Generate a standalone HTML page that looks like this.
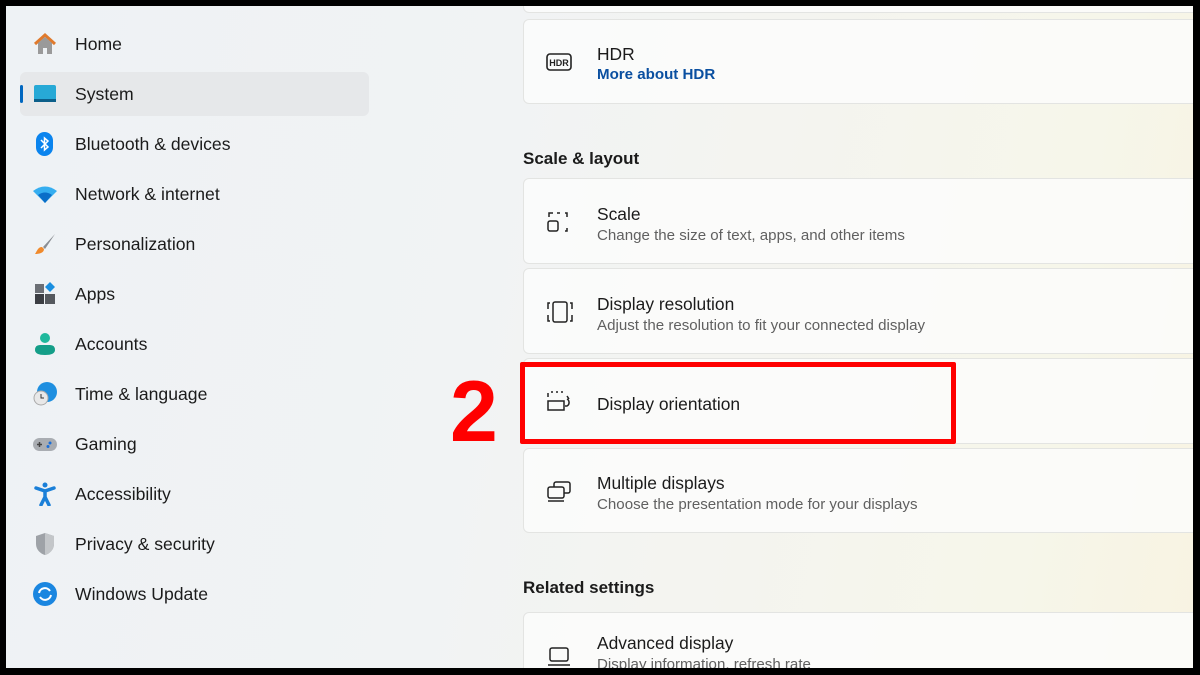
<!DOCTYPE html>
<html><head><style>
*{margin:0;padding:0;box-sizing:border-box}
body{width:1200px;height:675px;background:#000;position:relative;overflow:hidden;font-family:"Segoe UI","Liberation Sans",sans-serif}
#app{position:absolute;left:6px;top:6px;width:1187px;height:662px;overflow:hidden;background:linear-gradient(100deg,#eef2f5 0%,#f1f3f4 40%,#f4f4f0 60%,#f6f6ea 85%,#f8f3e2 100%)}
.nav{position:absolute;left:14px;width:349px;height:44px;border-radius:6px;font-size:17.6px;color:#1b1b1b}
.nav span{position:absolute;left:55px;top:12px}
.nav .ic{position:absolute;left:13px;top:10px;width:24px;height:24px}
.sel{background:#e6e8ea}
.bar{position:absolute;left:0;top:13px;width:3px;height:18px;border-radius:2px;background:#0067c0}
.card{position:absolute;left:517px;width:680px;background:rgba(252,252,251,0.85);border:1px solid #e3e4e2;border-radius:6px}
.card .t{position:absolute;left:73px;font-size:17.4px;color:#1b1b1b}
.card .s{position:absolute;left:73px;font-size:15.1px;color:#606060}
.card svg{position:absolute;left:22px}
.h{position:absolute;left:517px;font-size:17px;font-weight:600;color:#1b1b1b}
</style></head><body>
<div id="app">
<div class="nav" style="top:16px"><svg class="ic" viewBox="0 0 24 24"><path d="M2 12 12 3 22 12" fill="none" stroke="#e07a2c" stroke-width="3"/><path d="M5 11v11h5v-6h4v6h5V11l-7-6z" fill="#9a9a9a"/></svg><span>Home</span></div>
<div class="nav sel" style="top:66px"><div class="bar"></div><svg class="ic" viewBox="0 0 24 24"><rect x="1" y="3" width="22" height="17" rx="2" fill="#27a9d6"/><rect x="1" y="17" width="22" height="3" fill="#0c5f8a"/></svg><span>System</span></div>
<div class="nav" style="top:116px"><svg class="ic" viewBox="0 0 24 24"><rect x="3" y="0" width="17" height="24" rx="8.5" fill="#0a84ee"/><path d="M8 8l7 7-3.5 3V6L15 9 8 16" fill="none" stroke="#fff" stroke-width="1.5"/></svg><span>Bluetooth &amp; devices</span></div>
<div class="nav" style="top:166px"><svg class="ic" viewBox="0 0 24 24"><path d="M0 9Q12 0 24 9L12 21z" fill="#35aef0"/><path d="M5 13Q12 8 19 13L12 21z" fill="#0a6ec8"/></svg><span>Network &amp; internet</span></div>
<div class="nav" style="top:216px"><svg class="ic" viewBox="0 0 24 24"><path d="M22 2 10 15l2 2z" fill="#8a8e94"/><path d="M9 15c-4 0-5 4-7 7 4 0 9-1 9-5z" fill="#f08a2c"/></svg><span>Personalization</span></div>
<div class="nav" style="top:266px"><svg class="ic" viewBox="0 0 24 24"><rect x="2" y="2" width="9" height="9" fill="#6b6f75"/><rect x="2" y="12" width="9" height="10" fill="#3b3e43"/><rect x="12" y="12" width="10" height="10" fill="#55595e"/><path d="M17 0l5 5-5 5-5-5z" fill="#1a8fe0"/></svg><span>Apps</span></div>
<div class="nav" style="top:316px"><svg class="ic" viewBox="0 0 24 24"><circle cx="12" cy="6" r="5" fill="#1fb89c"/><path d="M2 18q0-5 5-5h10q5 0 5 5v0q0 5-10 5T2 18z" fill="#149e88"/></svg><span>Accounts</span></div>
<div class="nav" style="top:366px"><svg class="ic" viewBox="0 0 24 24"><circle cx="14" cy="10" r="10" fill="#1e8fe0"/><circle cx="8" cy="16" r="7" fill="#e8e8e8" stroke="#aaa"/><path d="M8 12v4h3" stroke="#333" fill="none"/></svg><span>Time &amp; language</span></div>
<div class="nav" style="top:416px"><svg class="ic" viewBox="0 0 24 24"><rect x="0" y="6" width="24" height="13" rx="6.5" fill="#a9adb2"/><path d="M4 12.5h5M6.5 10v5" stroke="#444" stroke-width="1.5"/><circle cx="17" cy="11" r="1.5" fill="#1a6ed8"/><circle cx="15" cy="14.5" r="1.5" fill="#1a6ed8"/></svg><span>Gaming</span></div>
<div class="nav" style="top:466px"><svg class="ic" viewBox="0 0 24 24"><circle cx="12" cy="3" r="2.5" fill="#1a7fd8"/><path d="M3 6l9 3 9-3M12 9v6l-4 8M12 15l4 8" stroke="#1a7fd8" stroke-width="3.5" fill="none" stroke-linecap="round"/></svg><span>Accessibility</span></div>
<div class="nav" style="top:516px"><svg class="ic" viewBox="0 0 24 24"><path d="M12 1 3 4v8c0 6 5 10 9 11 4-1 9-5 9-11V4z" fill="#9ea2a7"/><path d="M12 1v22c4-1 9-5 9-11V4z" fill="#c3c6c9"/></svg><span>Privacy &amp; security</span></div>
<div class="nav" style="top:566px"><svg class="ic" viewBox="0 0 24 24"><circle cx="12" cy="12" r="12" fill="#1a86e0"/><path d="M6 11a6 6 0 0 1 11-2M18 13a6 6 0 0 1-11 2" stroke="#fff" stroke-width="2" fill="none"/></svg><span>Windows Update</span></div>

<div class="card" style="top:-10px;height:17px"></div>
<div class="card" style="top:13px;height:85px"><svg style="top:33px" width="26" height="18" viewBox="0 0 26 18"><rect x="1" y="1" width="24" height="16" rx="3" fill="none" stroke="#222" stroke-width="1.6"/><text x="13" y="13" font-size="9" font-weight="bold" text-anchor="middle" font-family="Liberation Sans" fill="#222">HDR</text></svg><div class="t" style="top:24px">HDR</div><div class="s" style="top:46px;color:#0a4fa0;font-weight:600">More about HDR</div></div>
<div class="h" style="top:143px">Scale &amp; layout</div>
<div class="card" style="top:172px;height:86px"><svg style="top:31px" width="24" height="24" viewBox="0 0 24 24" fill="none" stroke="#222" stroke-width="1.5"><path d="M3 7V3h4M11 3h3M19 3h2v4M21 18v3h-2"/><rect x="2" y="11" width="10" height="10" rx="2"/></svg><div class="t" style="top:25px">Scale</div><div class="s" style="top:48px">Change the size of text, apps, and other items</div></div>
<div class="card" style="top:262px;height:86px"><svg style="top:31px" width="28" height="24" viewBox="0 0 28 24" fill="none" stroke="#222" stroke-width="1.5"><rect x="7" y="2" width="14" height="20" rx="2"/><path d="M4 3H2v6M2 15v6h2M24 3h2v6M26 15v6h-2"/></svg><div class="t" style="top:25px">Display resolution</div><div class="s" style="top:48px">Adjust the resolution to fit your connected display</div></div>
<div class="card" style="top:352px;height:86px"><svg style="top:31px" width="28" height="24" viewBox="0 0 28 24" fill="none" stroke="#222" stroke-width="1.5"><path d="M2 7V3M5 2h2M10 2h2M15 2h2M2 11h16v9H2z"/><path d="M21 9a4 4 0 0 1 0 7l-2 0M21 6l2 3"/></svg><div class="t" style="top:35px">Display orientation</div></div>
<div class="card" style="top:442px;height:85px"><svg style="top:30px" width="26" height="24" viewBox="0 0 26 24" fill="none" stroke="#222" stroke-width="1.5"><rect x="8" y="3" width="16" height="11" rx="2"/><rect x="2" y="8" width="16" height="11" rx="2" fill="#fbfbfa"/><path d="M2 22h16"/></svg><div class="t" style="top:24px">Multiple displays</div><div class="s" style="top:47px">Choose the presentation mode for your displays</div></div>
<div class="h" style="top:572px">Related settings</div>
<div class="card" style="top:606px;height:86px"><svg style="top:31px" width="26" height="24" viewBox="0 0 26 24" fill="none" stroke="#222" stroke-width="1.5"><rect x="4" y="4" width="18" height="13" rx="2"/><path d="M2 21h22"/></svg><div class="t" style="top:20px">Advanced display</div><div class="s" style="top:43px">Display information, refresh rate</div></div>

<div style="position:absolute;left:514px;top:356px;width:436px;height:82px;border:5px solid #f00;border-radius:2px"></div>
<div style="position:absolute;left:444px;top:356px;font-family:'Liberation Sans',sans-serif;font-weight:bold;font-size:86px;color:#f00;line-height:100px">2</div>
</div>
</body></html>
